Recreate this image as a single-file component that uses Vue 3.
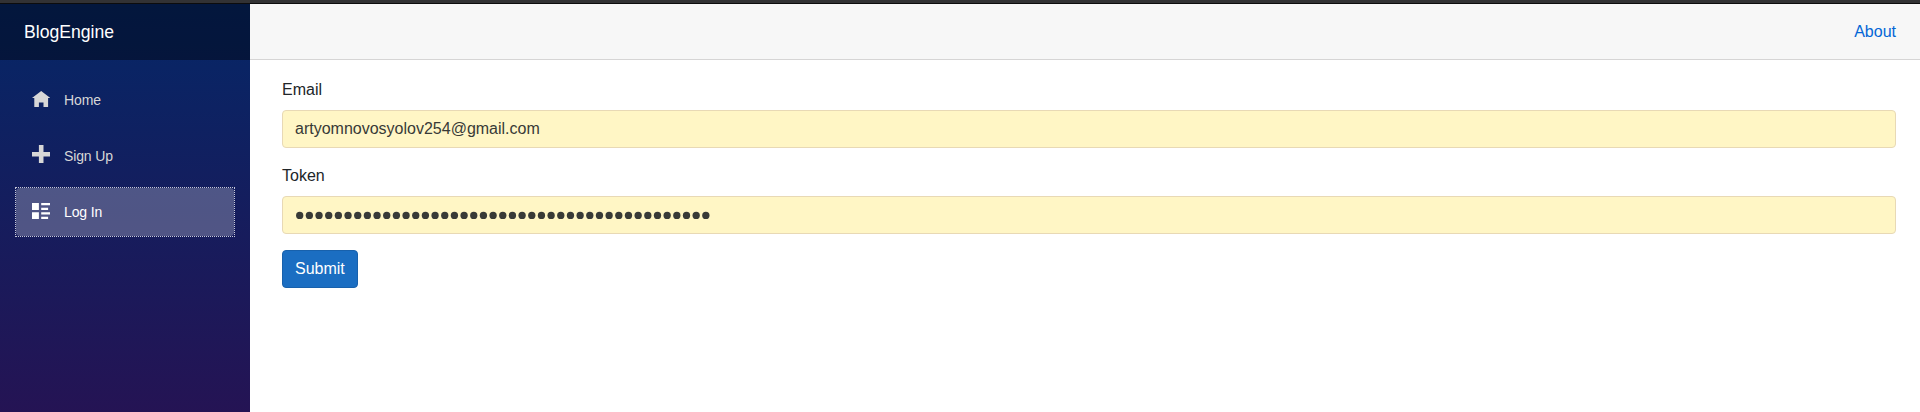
<script setup>
const links = [
  { label: 'Home', icon: 'M4 .9l-4 3h1v4h2v-2h2v2h2v-4.03l1 .03-4-3z' },
  { label: 'Sign Up', icon: 'M3 0v3h-3v2h3v3h2v-3h3v-2h-3v-3h-2z' },
  {
    label: 'Log In',
    icon: 'M0 .9v3h3v-3h-3zm4 0v1h4v-1h-4zm0 2v1h3v-1h-3zm-4 2v3h3v-3h-3zm4 0v1h4v-1h-4zm0 2v1h3v-1h-3z',
    active: true,
  },
]
const email = 'artyomnovosyolov254@gmail.com'
const tokenLength = 43
</script>

<template>
  <div class="window">
    <div class="chrome"></div>
    <div class="page">
      <aside class="sidebar">
        <div class="brand-row"><a class="brand">BlogEngine</a></div>
        <nav class="menu">
          <a v-for="link in links" :key="link.label" class="link" :class="{ active: link.active }">
            <svg class="icon" viewBox="0 0 8 8" aria-hidden="true"><path :d="link.icon" /></svg>
            <span>{{ link.label }}</span>
          </a>
        </nav>
      </aside>
      <main class="main">
        <header class="top-row"><a class="about">About</a></header>
        <form class="content" @submit.prevent>
          <div class="group">
            <label class="label">Email</label>
            <div class="field">{{ email }}</div>
          </div>
          <div class="group">
            <label class="label">Token</label>
            <div class="field">
              <svg class="mask" width="418" height="24" aria-hidden="true">
                <circle v-for="n in tokenLength" :key="n" :cx="4.7 + (n - 1) * 9.67" cy="12.4" r="3.65" />
              </svg>
            </div>
          </div>
          <button class="submit" type="submit">Submit</button>
        </form>
      </main>
    </div>
  </div>
</template>

<style>
body {
  margin: 0;
  overflow: hidden;
}
</style>

<style scoped>
.window {
  height: 412px;
  display: flex;
  flex-direction: column;
  overflow: hidden;
  background: #fff;
  color: #212529;
  font: 16px/24px "Liberation Sans", Arial, sans-serif;
}
.window * {
  box-sizing: border-box;
}
.chrome {
  flex: none;
  height: 4px;
  background: #323234;
  border-bottom: 1px solid #0c0c0d;
}
.page {
  flex: 1;
  display: flex;
  min-height: 0;
}
.sidebar {
  flex: none;
  width: 250px;
  background: linear-gradient(180deg, rgb(5, 39, 103) 0, #3a0647 685px);
}
.brand-row {
  height: 56px;
  display: flex;
  align-items: center;
  padding-left: 24px;
  background: rgba(0, 0, 0, 0.4);
}
.brand {
  color: #fff;
  font-size: 17.6px;
}
.menu {
  display: flex;
  flex-direction: column;
  gap: 8px;
  padding: 16px;
}
.link {
  position: relative;
  height: 48px;
  display: flex;
  align-items: center;
  padding: 0 16px;
  border-radius: 4px;
  color: #d7d7d7;
  font-size: 14px;
  line-height: 48px;
  letter-spacing: -0.12px;
}
.link.active {
  background: rgba(255, 255, 255, 0.25);
  color: #fff;
}
/* square dotted focus ring around the rounded link */
.link.active::after {
  content: "";
  position: absolute;
  inset: -1px;
  border: 1px dotted rgba(255, 255, 255, 0.75);
}
.icon {
  width: 18.4px;
  height: 18.4px;
  margin: 0 13.6px 4px 0;
  fill: currentColor;
}
.main {
  flex: 1;
  min-width: 0;
}
.top-row {
  height: 56px;
  display: flex;
  align-items: center;
  justify-content: flex-end;
  padding-right: 24px;
  background: #f7f7f7;
  border-bottom: 1px solid #d6d5d5;
}
.about {
  color: #0366d6;
}
.content {
  padding: 17.6px 24px 0 32px;
}
.group {
  margin-bottom: 16px;
}
.label {
  display: block;
  margin-bottom: 8px;
}
.field {
  height: 38px;
  padding: 6px 12px;
  background: #fff6c5;
  border: 1px solid #e8d9b5;
  border-radius: 4px;
  color: #383a37;
}
.mask {
  display: block;
  fill: #383a37;
}
.submit {
  display: block;
  height: 38px;
  padding: 6px 12px;
  border: 1px solid #1861ac;
  border-radius: 4px;
  background: #1b6ec2;
  color: #fff;
  font: inherit;
}
</style>
